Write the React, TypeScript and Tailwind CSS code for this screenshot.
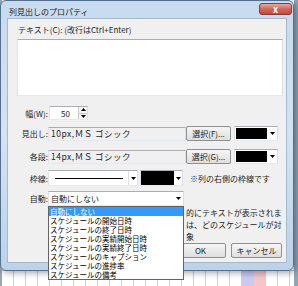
import React from "react";

function Down() {
  return (
    <svg width="5" height="3" viewBox="0 0 5 3" aria-hidden>
      <path d="M0 0h5L2.5 3z" fill="#000" />
    </svg>
  );
}

function Up() {
  return (
    <svg width="5" height="3" viewBox="0 0 5 3" aria-hidden>
      <path d="M0 3h5L2.5 0z" fill="#000" />
    </svg>
  );
}

const sunken =
  "border border-t-[#abadb3] border-l-[#e2e3ea] border-r-[#dbdfe6] border-b-[#e3e9ef]";

function ColorCombo() {
  return (
    <div className={`flex h-[15px] w-[44px] items-center bg-white ${sunken}`}>
      <div className="ml-[1px] h-[11px] w-[31px] bg-black" />
      <div className="flex flex-1 items-center justify-center">
        <Down />
      </div>
    </div>
  );
}

function Btn({ children, className = "" }: { children: React.ReactNode; className?: string }) {
  return (
    <div
      className={`flex items-center justify-center rounded-[2px] border border-[#8e8f8f] bg-gradient-to-b from-[#f6f6f6] to-[#dedede] ${className}`}
    >
      {children}
    </div>
  );
}

const items = [
  "自動にしない",
  "スケジュールの開始日時",
  "スケジュールの終了日時",
  "スケジュールの実績開始日時",
  "スケジュールの実績終了日時",
  "スケジュールのキャプション",
  "スケジュールの進捗率",
  "スケジュールの備考",
];

export default function App() {
  const cols = Array.from({ length: 24 });
  return (
    <div className="relative h-[286px] w-[298px] overflow-hidden bg-white font-['Noto_Sans_CJK_JP',sans-serif] text-[8px] leading-[11px] text-[#1e1e1e]">
      {/* desktop behind */}
      <div className="flex h-full">
        <div className="w-[2px] bg-[#9aa6b1]" />
        <div className="flex flex-1 flex-col">
          <div className="flex-1" />
          <div className="flex h-[16px] border-t border-[#c8c8c8]">
            {cols.map((_, i) => (
              <div
                key={i}
                className={`w-[12px] border-r border-[#d0d0d0] ${i === 20 ? "bg-[#c9c9f3]" : ""} ${i === 21 ? "bg-[#f4c6cb]" : ""}`}
              />
            ))}
          </div>
        </div>
        <div className="w-[4px] bg-[#8fa5bb]" />
      </div>

      {/* dialog window */}
      <div className="absolute left-0 top-0 flex h-[271px] w-[294px] flex-col rounded-[6px] border border-[#55708f] bg-gradient-to-b from-[#c8daee] via-[#d3e3f2] to-[#bcd2e9] shadow-[2px_2px_6px_rgba(0,0,0,0.35)]">
        <div className="flex h-[20px] items-start justify-between pl-[8px] pr-[1px]">
          <span className="mt-[5px] text-[8px] leading-[11px] text-[#1b1b1b]">列見出しのプロパティ</span>
          <div className="mt-[2px] flex h-[12px] w-[33px] items-center justify-center rounded-[3px] border border-[#8a3a32] bg-gradient-to-b from-[#e9a99c] via-[#d0685a] to-[#c04a3c]">
            <span className="text-[9px] font-bold leading-[9px] text-white">x</span>
          </div>
        </div>

        <div className="mx-[6px] mb-[7px] flex flex-1 flex-col border border-[#a6b8cb] bg-[#f0f0f0] pl-[9px]">
          <div className="mt-[5px] pl-[1px]">テキスト(C): (改行はCtrl+Enter)</div>
          <div className={`mt-[4px] h-[57px] w-[266px] bg-white ${sunken}`} />

          {/* 幅 */}
          <div className="mt-[10px] flex h-[14px] items-center">
            <div className="w-[31px] text-right">幅(W):</div>
            <div className={`ml-[1px] flex h-[14px] w-[39px] bg-white ${sunken}`}>
              <div className="flex flex-1 items-center justify-end pr-[8px] text-[8px]">50</div>
              <div className="flex w-[9px] flex-col border-l border-[#c8c8c8]">
                <div className="flex flex-1 items-center justify-center border-b border-[#c8c8c8] bg-[#f4f4f4]">
                  <Up />
                </div>
                <div className="flex flex-1 items-center justify-center bg-[#f4f4f4]">
                  <Down />
                </div>
              </div>
            </div>
          </div>

          {/* 見出し */}
          <div className="mt-[6px] flex h-[15px] items-center">
            <div className="w-[31px] text-right">見出し:</div>
            <div className={`flex h-[14px] w-[138px] items-center pl-[2px] text-[8.5px] tracking-[0.5px] ${sunken}`}>
              10px,ＭＳ ゴシック
            </div>
            <Btn className="h-[15px] w-[45px]">選択(F)...</Btn>
            <div className="ml-[3px]">
              <ColorCombo />
            </div>
          </div>

          {/* 各段 */}
          <div className="mt-[8px] flex h-[15px] items-center">
            <div className="w-[31px] text-right">各段:</div>
            <div className={`flex h-[14px] w-[138px] items-center pl-[2px] text-[8.5px] tracking-[0.5px] ${sunken}`}>
              14px,ＭＳ ゴシック
            </div>
            <Btn className="h-[15px] w-[45px]">選択(G)...</Btn>
            <div className="ml-[3px]">
              <ColorCombo />
            </div>
          </div>

          {/* 枠線 */}
          <div className="mt-[6px] flex h-[16px] items-center">
            <div className="w-[31px] text-right">枠線:</div>
            <div className={`flex h-[16px] w-[90px] items-center bg-white ${sunken}`}>
              <div className="ml-[6px] h-px w-[68px] bg-black" />
              <div className="ml-auto flex h-full w-[9px] items-center justify-center border-l border-[#e0e0e0]">
                <Down />
              </div>
            </div>
            <div className={`ml-[2px] flex h-[16px] w-[43px] items-center bg-white ${sunken}`}>
              <div className="h-full w-[33px] bg-black" />
              <div className="flex flex-1 items-center justify-center">
                <Down />
              </div>
            </div>
            <div className="ml-[7px]">※列の右側の枠線です</div>
          </div>

          {/* 自動 */}
          <div className="mt-[5px] flex h-[15px] items-center">
            <div className="w-[31px] text-right">自動:</div>
            <div className="relative">
              <div className={`flex h-[15px] w-[136px] items-center bg-white pl-[2px] ${sunken}`}>
                <span className="leading-[10px]">自動にしない</span>
                <div className="ml-auto flex h-full w-[10px] items-center justify-center">
                  <Down />
                </div>
              </div>
              <div className="absolute left-0 top-full z-10 w-[136px] border border-[#646464] bg-white">
                {items.map((t, i) => (
                  <div
                    key={t}
                    className={`flex h-[9px] items-center overflow-hidden whitespace-nowrap pl-[1px] ${i === 0 ? "bg-[#3399ff] text-white" : "text-black"}`}
                  >
                    <span className="text-[7.5px] leading-[8px]">{t}</span>
                  </div>
                ))}
              </div>
            </div>
          </div>

          <div className="mt-[1px] pl-[169px] leading-[12px]">
            <div>的にテキストが表示されま</div>
            <div>は、どのスケジュールが対象</div>
          </div>

          <div className="mt-auto mb-[4px] flex justify-end gap-[5px] pr-[4px]">
            <Btn className="h-[15px] w-[51px]">OK</Btn>
            <Btn className="h-[15px] w-[51px]">キャンセル</Btn>
          </div>
        </div>
      </div>
    </div>
  );
}
